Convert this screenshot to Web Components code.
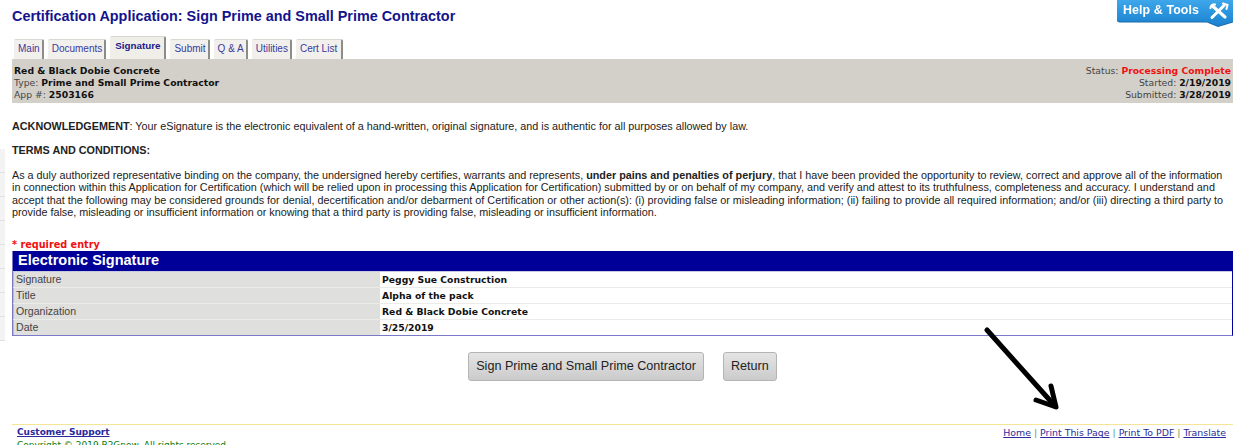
<!DOCTYPE html>
<html>
<head>
<meta charset="utf-8">
<title>Certification Application</title>
<style>
html, body { margin: 0; padding: 0; height: 445px; overflow: hidden; background: #fff; }
body { font-family: "Liberation Sans", Arial, sans-serif; }
</style>
</head>
<body>
<cert-page></cert-page>
<script>
customElements.define("help-tab", class extends HTMLElement {
    constructor() {
        super()
            .attachShadow({ mode: "open" })
            .innerHTML = `
            <style>
            :host {
                display: block;
                position: absolute;
                top: 0;
                right: 7px;
                width: 116px;
                height: 27px;
                filter: drop-shadow(0 1px 0 #1c6aa8);
            }
            svg { position: absolute; inset: 0; }
            span {
                position: absolute;
                left: 6px;
                top: 3px;
                color: #fff;
                font: bold 12.400px/15px "Liberation Sans", Arial, sans-serif;
                letter-spacing: .1px;
            }
            </style>
            <svg width="116" height="27" viewBox="0 0 116 27">
                <defs><linearGradient id="g" x1="0" y1="0" x2="0" y2="1">
                    <stop offset="0" stop-color="#3ea6ea"/><stop offset="1" stop-color="#1a82cf"/>
                </linearGradient></defs>
                <path d="M0 0H116V21.500L101 26 90 21.500H3Q0 21.500 0 19Z" fill="url(#g)"/>
                <g stroke="#fff" fill="none" stroke-linecap="round">
                    <path d="M95.500 6 108 17" stroke-width="3.200"/>
                    <path d="M107 5.500 95 17.500" stroke-width="3"/>
                    <path d="M93.500 8A3.800 3.800 0 0 1 98 4.500" stroke-width="2.200"/>
                    <path d="M106 3.500 110.500 5 109.500 9" stroke-width="2"/>
                </g>
            </svg>
            <span><slot></slot></span>`;
    }
});

// faint strip of a clipped side menu, only its last pixels show at the window edge
customElements.define("side-rail", class extends HTMLElement {
    constructor() {
        super()
            .attachShadow({ mode: "open" })
            .innerHTML = `
            <style>
            :host {
                display: grid;
                grid-auto-rows: 24px;
                position: absolute;
                left: 0;
                top: 149px;
                width: 5px;
            }
            div { background: #f3f3f3; border-bottom: 1px solid #e2e2e2; }
            div:first-child { background: #dedede; }
            </style>
            <div></div><div></div><div></div><div></div><div></div><div></div><div></div><div></div>`;
    }
});

customElements.define("tab-bar", class extends HTMLElement {
    constructor() {
        super()
            .attachShadow({ mode: "open" })
            .innerHTML = `
            <style>
            :host {
                display: flex;
                align-items: flex-end;
                gap: 4px;
                height: 24px;
                margin: 10px 0 0 2px;
            }
            </style>
            <slot></slot>`;
    }
});

customElements.define("tab-item", class extends HTMLElement {
    constructor() {
        super()
            .attachShadow({ mode: "open" })
            .innerHTML = `
            <style>
            :host {
                display: block;
                box-sizing: border-box;
                height: 20px;
                padding: 0 2px 0 4px;
                background: #f1f0ec;
                border-right: 2px solid #8d8d88;
                border-top: 1px solid #d8d8d2;
                border-radius: 2px 2px 0 0;
                color: #3a3a9c;
                font-size: 10px;
                line-height: 17px;
                white-space: nowrap;
            }
            :host([active]) {
                height: 23px;
                background: #efeee9;
                color: #1a1a8c;
                font-weight: bold;
                font-size: 9.800px;
                line-height: 18px;
                padding: 0 4px 0 5px;
            }
            :host(:last-child) { padding-right: 4px; }
            </style>
            <slot></slot>`;
    }
});

customElements.define("info-band", class extends HTMLElement {
    constructor() {
        super()
            .attachShadow({ mode: "open" })
            .innerHTML = `
            <style>
            :host {
                display: flex;
                justify-content: space-between;
                box-sizing: border-box;
                height: 44px;
                padding: 5.500px 2px 0 2px;
                background: #d3d0c9;
                font: 9.250px/12.300px "DejaVu Sans", Verdana, sans-serif;
                color: #444;
            }
            .right { text-align: right; }
            </style>
            <div><slot name="left"></slot></div>
            <div class="right"><slot name="right"></slot></div>`;
    }
});

customElements.define("sig-row", class extends HTMLElement {
    constructor() {
        super()
            .attachShadow({ mode: "open" })
            .innerHTML = `
            <style>
            :host {
                display: grid;
                grid-template-columns: 367px 1fr;
                height: 16px;
                box-sizing: border-box;
                border-bottom: 1px solid #ebebe8;
            }
            :host(:last-child) { border-bottom: 0; height: 15px; }
            .k {
                background: #dfdfdd;
                color: #444;
                font: 10.600px/15px "Liberation Sans", Arial, sans-serif;
                padding-left: 2px;
                border-left: 1px solid #bbb;
            }
            .v {
                color: #111;
                font: bold 9.250px/15px "DejaVu Sans", Verdana, sans-serif;
                padding-left: 2px;
            }
            </style>
            <div class="k"><slot name="k"></slot></div>
            <div class="v"><slot name="v"></slot></div>`;
    }
});

customElements.define("sig-table", class extends HTMLElement {
    constructor() {
        super()
            .attachShadow({ mode: "open" })
            .innerHTML = `
            <style>
            :host {
                display: block;
                box-sizing: border-box;
                height: 85px;
                border: 1px solid #00009a;
                border-top: 0;
                border-bottom: 1px solid #7a7ac8;
                border-left-color: #7a7ac8;
            }
            h2 {
                margin: 0;
                height: 20px;
                padding-left: 5px;
                background: #000099;
                color: #fff;
                font: bold 14.500px/19px "Liberation Sans", Arial, sans-serif;
                border-bottom: 1px solid #c8c8e0;
                box-sizing: content-box;
            }
            </style>
            <h2><slot name="title"></slot></h2>
            <slot></slot>`;
    }
});

customElements.define("gray-button", class extends HTMLElement {
    constructor() {
        super()
            .attachShadow({ mode: "open" })
            .innerHTML = `
            <style>
            :host {
                display: block;
                box-sizing: border-box;
                height: 29px;
                padding: 0 7px;
                border: 1px solid #b4b4b4;
                border-radius: 3px;
                background: linear-gradient(#e4e4e4, #cbcbcb);
                color: #222;
                font: 12.600px/26px "Liberation Sans", Arial, sans-serif;
                white-space: nowrap;
            }
            </style>
            <slot></slot>`;
    }
});

customElements.define("page-footer", class extends HTMLElement {
    constructor() {
        super()
            .attachShadow({ mode: "open" })
            .innerHTML = `
            <style>
            :host {
                display: block;
                border-top: 1px solid #f7e596;
                padding: 1px 7px 0 5px;
            }
            .row { display: flex; justify-content: space-between; }
            .links { font: 9.400px/13px "DejaVu Sans", Verdana, sans-serif; color: #5a9a6a; }
            .support { font: bold 9px/13px "DejaVu Sans", Verdana, sans-serif; }
            .copy { font: 9px/13px "DejaVu Sans", Verdana, sans-serif; color: #0a7a0a; }
            </style>
            <div class="row">
                <div class="support"><slot name="support"></slot></div>
                <div class="links"><slot name="links"></slot></div>
            </div>
            <div class="copy"><slot name="copy"></slot></div>`;
    }
});

customElements.define("cert-page", class extends HTMLElement {
    constructor() {
        super()
            .attachShadow({ mode: "open" })
            .innerHTML = `
            <style>
            :host {
                display: block;
                position: relative;
                box-sizing: border-box;
                height: 445px;
                padding: 8px 7px 0 12px;
                overflow: hidden;
                color: #222;
                font: 10.800px/12.400px "Liberation Sans", Arial, sans-serif;
            }
            h1 {
                margin: 0;
                color: #14148c;
                font: bold 14.400px/17px "Liberation Sans", Arial, sans-serif;
            }
            p { margin: 0; }
            .ack { margin-top: 17px; }
            .terms { margin-top: 12px; font-weight: bold; }
            .body { margin-top: 12px; }
            .req {
                margin-top: 20px;
                color: #f01010;
                font: bold 9.700px/13px "DejaVu Sans", Verdana, sans-serif;
            }
            .buttons {
                display: flex;
                justify-content: center;
                gap: 19px;
                margin-top: 16px;
            }
            .arrow { position: absolute; left: 980px; top: 324px; }
            .foot { margin-top: 43px; }
            a { color: #2a2a9c; }
            </style>
            <side-rail></side-rail>
            <help-tab>Help &amp; Tools</help-tab>
            <h1>Certification Application: Sign Prime and Small Prime Contractor</h1>
            <tab-bar>
                <tab-item>Main</tab-item>
                <tab-item>Documents</tab-item>
                <tab-item active>Signature</tab-item>
                <tab-item>Submit</tab-item>
                <tab-item>Q &amp; A</tab-item>
                <tab-item>Utilities</tab-item>
                <tab-item>Cert List</tab-item>
            </tab-bar>
            <info-band>
                <span slot="left"><b style="color:#111">Red &amp; Black Dobie Concrete</b><br>Type: <b style="color:#111">Prime and Small Prime Contractor</b><br>App #: <b style="color:#111">2503166</b></span>
                <span slot="right">Status: <b style="color:#f01010">Processing Complete</b><br>Started: <b style="color:#111">2/19/2019</b><br>Submitted: <b style="color:#111">3/28/2019</b></span>
            </info-band>
            <p class="ack"><b>ACKNOWLEDGEMENT</b>: Your eSignature is the electronic equivalent of a hand-written, original signature, and is authentic for all purposes allowed by law.</p>
            <p class="terms">TERMS AND CONDITIONS:</p>
            <p class="body">As a duly authorized representative binding on the company, the undersigned hereby certifies, warrants and represents, <b>under pains and penalties of perjury</b>, that I have been provided the opportunity to review, correct and approve all of the information<br>in connection within this Application for Certification (which will be relied upon in processing this Application for Certification) submitted by or on behalf of my company, and verify and attest to its truthfulness, completeness and accuracy. I understand and<br>accept that the following may be considered grounds for denial, decertification and/or debarment of Certification or other action(s): (i) providing false or misleading information; (ii) failing to provide all required information; and/or (iii) directing a third party to<br>provide false, misleading or insufficient information or knowing that a third party is providing false, misleading or insufficient information.</p>
            <div class="req">* required entry</div>
            <sig-table>
                <span slot="title">Electronic Signature</span>
                <sig-row><span slot="k">Signature</span><span slot="v">Peggy Sue Construction</span></sig-row>
                <sig-row><span slot="k">Title</span><span slot="v">Alpha of the pack</span></sig-row>
                <sig-row><span slot="k">Organization</span><span slot="v">Red &amp; Black Dobie Concrete</span></sig-row>
                <sig-row><span slot="k">Date</span><span slot="v">3/25/2019</span></sig-row>
            </sig-table>
            <div class="buttons">
                <gray-button>Sign Prime and Small Prime Contractor</gray-button>
                <gray-button>Return</gray-button>
            </div>
            <page-footer class="foot">
                <a slot="support" href="#">Customer Support</a>
                <span slot="links"><a href="#">Home</a> | <a href="#">Print This Page</a> | <a href="#">Print To PDF</a> | <a href="#">Translate</a></span>
                <span slot="copy">Copyright © 2019 B2Gnow. All rights reserved.</span>
            </page-footer>
            <svg class="arrow" width="90" height="90" viewBox="0 0 90 90" fill="none" stroke="#000" stroke-width="5" stroke-linecap="round" stroke-linejoin="round">
                <path d="M7 6 75 82"/>
                <path d="M71 62 76 83 56 76"/>
            </svg>`;
    }
});
</script>
</body>
</html>
